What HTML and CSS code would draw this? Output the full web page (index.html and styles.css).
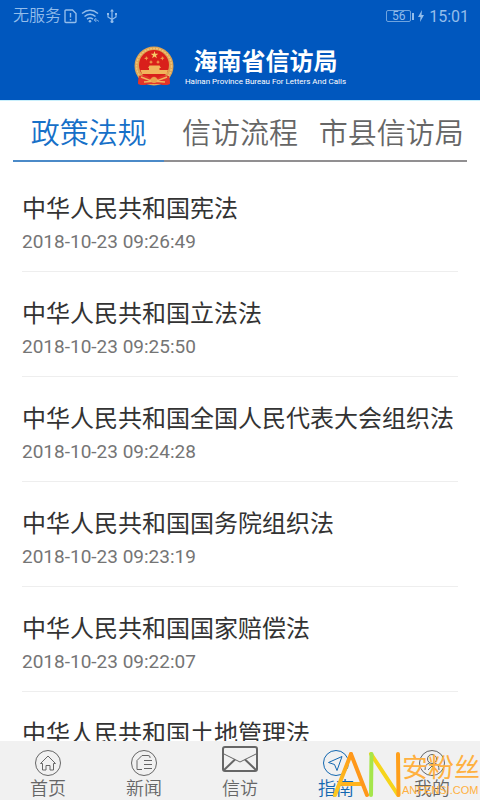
FILE: index.html
```html
<!DOCTYPE html>
<html lang="zh-CN">
<head>
<meta charset="utf-8">
<meta name="viewport" content="width=device-width, initial-scale=1">
<title>海南省信访局</title>
<link rel="stylesheet" href="styles.css">
</head>
<body>
<header class="header">
  <div class="status">
    <div class="status-group">
      <span class="carrier">无服务</span>
      <svg width="13" height="16" viewBox="0 0 13 16" fill="none" stroke="currentColor" stroke-width="1.4"><path d="M1 3Q1 2 2 2H8.500L12 5.500V13.500Q12 14.500 11 14.500H2Q1 14.500 1 13.500Z"/><path d="M6.500 5V9.500M6.500 11V12.600"/></svg>
      <svg class="wifi" width="19" height="16" viewBox="0 0 19 16" fill="none" stroke="currentColor" stroke-width="1.500"><path d="M1 5.500Q9 -1 17 5.500M3.500 8.500Q9 4 14.500 8.500M6 11.200Q9 9 12 11.200"/><circle cx="9" cy="13.300" r="1.300" fill="currentColor" stroke="none"/><path d="M15 10.500V13.500L13 12ZM16 12L18 13.500" stroke-width=".8"/></svg>
      <svg width="12" height="16" viewBox="0 0 12 16" fill="none" stroke="currentColor" stroke-width="1.200"><path d="M6 2V13M2 6V9L6 11.500L10 9V6"/><path d="M4 3.500L6 1L8 3.500ZM1 5H3V7H1ZM9 5H11V7H9Z" fill="currentColor" stroke="none"/><circle cx="6" cy="13.500" r="1.500" fill="currentColor" stroke="none"/></svg>
    </div>
    <div class="status-group right">
      <span class="battery">56</span>
      <svg width="6" height="12" viewBox="0 0 6 12" fill="currentColor"><path d="M4 0L0 7H2.500L2 12L6 5H3.500Z"/></svg>
      <time class="clock">15:01</time>
    </div>
  </div>
  <div class="brand">
    <svg class="emblem" width="40" height="40" viewBox="0 0 40 40">
      <path d="M5 29L4 37Q8 40 13 38.500H27Q32 40 36 37L35 29Z" fill="#d83324"/>
      <circle cx="20" cy="20" r="19.500" fill="#dda354"/>
      <circle cx="20" cy="20" r="17.500" fill="none" stroke="#efc577" stroke-width="1.500" stroke-dasharray="2 1"/>
      <circle cx="20" cy="19" r="15" fill="#d91f1b"/>
      <path d="M20.500 5L21.400 7.800H24.300L22 9.500L22.900 12.300L20.500 10.600L18.100 12.300L19 9.500L16.700 7.800H19.600Z" fill="#f7cb68"/>
      <g fill="#f0a04c"><path d="M12 10L13 11.500L14.500 12L13 13L12.500 14.500L11.700 13L10 12.500L11.700 11.700Z"/><path d="M28 10L29 11.500L30.500 12L29 13L28.500 14.500L27.700 13L26 12.500L27.700 11.700Z"/><path d="M17 14L17.700 15.500L19 16L17.700 16.700L17 18L16.300 16.700L15 16L16.300 15.500Z"/><path d="M24 14L24.700 15.500L26 16L24.700 16.700L24 18L23.300 16.700L22 16L23.300 15.500Z"/></g>
      <path d="M14 22L15.500 19.500H25.500L27 22H25.500V24H34L32.500 28H8L6.500 24H15V22Z" fill="#f1b45c"/>
      <path d="M5 30Q12 28 16 32L20 30L24 32Q28 28 35 30L36 38Q32 40 27 38H13Q8 40 4 38Z" fill="#e3342a"/>
      <path d="M7 31L16 34.500Q20 31 24 34.500L33 31M10 36L17 35.500H24L31 36" fill="none" stroke="#efb65d" stroke-width="1.500"/>
      <circle cx="20" cy="34" r="3" fill="#e8a44e"/>
    </svg>
    <div class="brand-text">
      <h1>海南省信访局</h1>
      <p>Hainan Province Bureau For Letters And Calls</p>
    </div>
  </div>
</header>
<div class="tabs" role="tablist">
  <button class="tab active" role="tab" aria-selected="true">政策法规</button>
  <button class="tab" role="tab" aria-selected="false">信访流程</button>
  <button class="tab" role="tab" aria-selected="false">市县信访局</button>
</div>
<main class="content">
  <ul class="list">
    <li><h2>中华人民共和国宪法</h2><time>2018-10-23 09:26:49</time></li>
    <li><h2>中华人民共和国立法法</h2><time>2018-10-23 09:25:50</time></li>
    <li><h2>中华人民共和国全国人民代表大会组织法</h2><time>2018-10-23 09:24:28</time></li>
    <li><h2>中华人民共和国国务院组织法</h2><time>2018-10-23 09:23:19</time></li>
    <li><h2>中华人民共和国国家赔偿法</h2><time>2018-10-23 09:22:07</time></li>
    <li><h2>中华人民共和国土地管理法</h2></li>
  </ul>
</main>
<nav class="nav">
  <a href="#home"><svg width="28" height="28" viewBox="0 0 28 28"><circle cx="14" cy="14" r="12.500"/><path d="M6.500 14.500L14 7L21.500 14.500H19.500V21H16V16.500H12V21H8.500V14.500Z"/></svg><span>首页</span></a>
  <a href="#news"><svg width="28" height="28" viewBox="0 0 28 28"><circle cx="14" cy="14" r="12.500"/><path d="M20 9V8Q20 6.500 18 6.500H12L7 11.500V20.500H12M14 11.500H22M14 15.500H22M14 19.500H22"/></svg><span>新闻</span></a>
  <a href="#petition"><svg class="mail" width="38" height="28" viewBox="0 0 38 28"><rect x="2" y="2" width="34" height="24" rx="2"/><path d="M3 9L19 17L35 9" stroke-width="1"/><path d="M3 25L14 14.500M35 25L24 14.500"/></svg><span>信访</span></a>
  <a href="#guide" class="active" aria-current="page"><svg width="28" height="28" viewBox="0 0 28 28"><circle cx="14" cy="14" r="12.500"/><path d="M20 7.500L6.500 13.500L12.500 15.500L15 21.500Z"/></svg><span>指南</span></a>
  <a href="#mine"><svg width="28" height="28" viewBox="0 0 28 28"><circle cx="14" cy="14" r="12.500"/><circle cx="14" cy="10" r="4.500"/><path d="M7 21Q7 15 11.500 14M21 21Q21 15 16.500 14M10 21L14 17L18 21"/></svg><span>我的</span></a>
</nav>
<div class="watermark">
  <svg width="70" height="48" viewBox="0 0 70 48" fill="none" stroke-width="4" stroke-linecap="round">
    <defs><linearGradient id="fade" x1="0" y1="0" x2="0" y2="1"><stop offset="0" stop-color="#ff9b19"/><stop offset="1" stop-color="#fccb20"/></linearGradient></defs>
    <path d="M10 33H29" stroke="#ffb31c"/>
    <path d="M19 3L3 44" stroke="url(#fade)"/>
    <path d="M19 3L35 44" stroke="#ff981b"/>
    <path d="M39 3L66 44" stroke="#f6d51c"/>
    <path d="M39.500 3L39 44" stroke="#a5e64b"/>
    <path d="M66 3L66.500 44" stroke="#ff9f1b"/>
  </svg>
  <div class="watermark-text"><span class="watermark-name">安粉丝</span><span class="watermark-site">ANFENSI.COM</span></div>
</div>
</body>
</html>
```
FILE: styles.css
```css
* { box-sizing: border-box; }

body {
  margin: 0;
  height: 100vh;
  display: flex;
  flex-direction: column;
  position: relative;
  overflow: hidden;
  background: #fff;
  color: #333;
  font-family: Roboto, "Noto Sans CJK SC", sans-serif;
}

h1, h2, p, ul { margin: 0; padding: 0; font-weight: 400; }

.header {
  background: #0057be;
  border-bottom: 1px solid #c8effc;
  color: #fff;
}

.status {
  display: flex;
  justify-content: space-between;
  align-items: center;
  height: 32px;
  padding: 0 11px 0 13px;
  color: #93bdeb;
}

.status-group { display: flex; align-items: center; gap: 3px; }
.wifi { margin: 0 3px 0 1px; }
.carrier { font-size: 16px; line-height: 20px; font-weight: 350; }
.right { gap: 5px; }

.battery {
  position: relative;
  width: 25px;
  margin-right: 2px;
  border: 1px solid #6fa4df;
  border-radius: 2px;
  font-size: 12px;
  line-height: 10px;
  text-align: center;
}

.battery::after {
  content: "";
  position: absolute;
  right: -4px;
  top: 2px;
  width: 2px;
  height: 7px;
  background: currentColor;
}

.clock { font-size: 16px; }

.brand {
  display: flex;
  justify-content: center;
  gap: 11px;
  height: 68px;
  padding-top: 14px;
}

.brand-text { text-align: center; }
.brand h1 { font-size: 24px; line-height: 32px; font-weight: 700; }
.brand p { font-size: 8px; line-height: 8px; }

.tabs {
  display: grid;
  grid-template-columns: repeat(3, 1fr);
  margin: 0 13px;
}

.tab {
  height: 61px;
  padding: 6px 0 0;
  border: 0;
  border-bottom: 2px solid #918f91;
  background: none;
  color: #666;
  font: inherit;
  font-size: 29px;
  font-weight: 350;
  line-height: 52px;
  white-space: nowrap;
}

.tab.active { color: #1670c8; border-color: #4b8ac8; }

.content { flex: 1; min-height: 0; overflow: hidden; padding: 5px 22px 0; }
.list { list-style: none; }

.list li {
  height: 105px;
  padding-top: 23px;
  border-bottom: 1px solid #eee;
}

.list h2 { font-size: 24px; line-height: 38px; font-weight: 400; color: #333; white-space: nowrap; }
.list time { display: block; font-size: 19px; line-height: 28px; color: #757575; }

.nav {
  display: grid;
  grid-template-columns: repeat(5, 1fr);
  height: 59px;
  padding-top: 8px;
  background: #f1f1f1;
}

.nav a {
  display: flex;
  flex-direction: column;
  align-items: center;
  color: #666;
  font-size: 18px;
  font-weight: 350;
  line-height: 24px;
  text-decoration: none;
}

.nav svg { fill: none; stroke: currentColor; stroke-width: 1; }
.nav .mail { margin: -4px 0 4px; stroke-width: 2; }
.nav a.active { color: #1267b0; }

.watermark {
  position: absolute;
  right: 0;
  bottom: 1px;
  display: flex;
  pointer-events: none;
}

.watermark-text { display: flex; flex-direction: column; padding-top: 2px; color: #ffb040; }
.watermark-name { font-size: 26px; line-height: 30px; }
.watermark-site { font-family: "Liberation Sans Narrow", "Liberation Sans", sans-serif; font-size: 11px; line-height: 14px; }
```
